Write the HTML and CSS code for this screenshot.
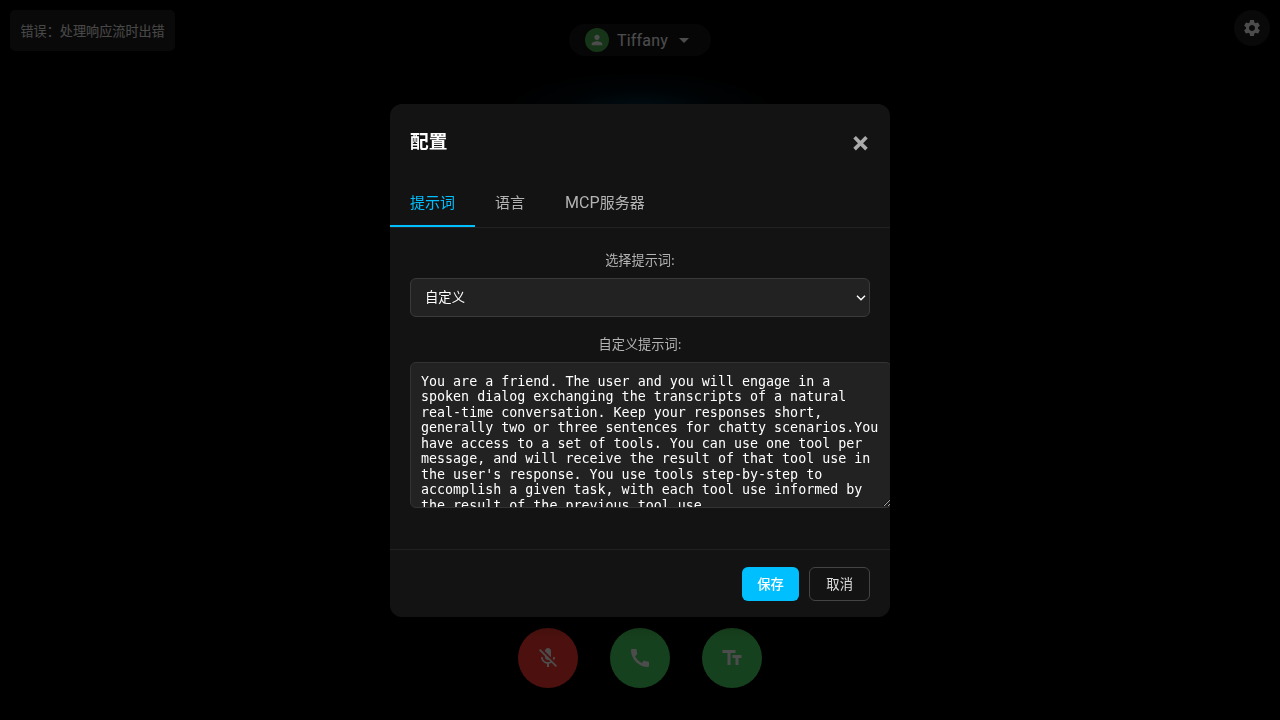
FILE: index.html
```
<!DOCTYPE html>
<html lang="zh">
<head>
<meta charset="utf-8">
<title>配置</title>
<link rel="stylesheet" href="styles.css">
</head>
<body>
<div class="app">
  <div class="glow"></div>
  <header class="topbar">
    <div class="status">错误：处理响应流时出错</div>
    <div class="voice">
      <span class="avatar"><svg viewBox="0 0 24 24" width="16" height="16"><path d="M12 12c2.21 0 4-1.79 4-4s-1.79-4-4-4-4 1.790-4 4 1.790 4 4 4zm0 2c-2.670 0-8 1.340-8 4v2h16v-2c0-2.660-5.330-4-8-4z"/></svg></span>
      <span class="voice-name">Tiffany</span>
      <svg class="caret" viewBox="0 0 24 24" width="24" height="24"><path d="M7 10l5 5 5-5z"/></svg>
    </div>
    <button class="gear"><svg viewBox="0 0 24 24" width="20" height="20"><path d="M19.14 12.94c.04-.3.06-.61.06-.94 0-.32-.02-.64-.07-.94l2.030-1.580c.18-.14.23-.41.12-.61l-1.920-3.320c-.12-.22-.37-.29-.59-.22l-2.390.96c-.5-.38-1.030-.7-1.620-.94l-.36-2.540c-.04-.24-.24-.41-.48-.41h-3.840c-.24 0-.43.17-.47.41l-.36 2.540c-.59.24-1.130.57-1.620.94l-2.390-.96c-.22-.08-.47 0-.59.22L2.740 8.870c-.12.21-.08.47.12.61l2.030 1.580c-.05.3-.09.63-.09.94s.02.64.07.94l-2.030 1.580c-.18.14-.23.41-.12.61l1.920 3.320c.12.22.37.29.59.22l2.390-.96c.5.38 1.030.7 1.620.94l.36 2.540c.05.24.24.41.48.41h3.840c.24 0 .44-.17.47-.41l.36-2.540c.59-.24 1.130-.56 1.620-.94l2.390.96c.22.08.47 0 .59-.22l1.920-3.320c.12-.22.07-.47-.12-.61l-2.010-1.580zM12 15.600c-1.980 0-3.600-1.620-3.600-3.600s1.620-3.600 3.600-3.600 3.600 1.620 3.600 3.600-1.620 3.600-3.600 3.600z"/></svg></button>
  </header>
  <footer class="controls">
    <button class="round mic"><svg viewBox="0 0 24 24" width="24" height="24"><path d="M19 11h-1.700c0 .74-.16 1.430-.43 2.050l1.230 1.230c.56-.98.9-2.090.9-3.280zm-4.020.17c0-.06.02-.11.02-.17V5c0-1.660-1.340-3-3-3S9 3.340 9 5v.18l5.980 5.990zM4.270 3L3 4.270l6.010 6.010V11c0 1.660 1.330 3 2.990 3 .22 0 .44-.03.65-.08l1.660 1.660c-.71.33-1.500.52-2.310.52-2.760 0-5.300-2.100-5.300-5.100H5c0 3.410 2.720 6.230 6 6.720V21h2v-3.280c.91-.13 1.770-.45 2.540-.9L19.730 21 21 19.730 4.270 3z"/></svg></button>
    <button class="round"><svg viewBox="0 0 24 24" width="24" height="24"><path d="M20.010 15.380c-1.230 0-2.420-.2-3.530-.56-.35-.12-.74-.03-1.010.24l-1.570 1.970c-2.830-1.350-5.480-3.900-6.890-6.830l1.950-1.660c.27-.28.35-.67.24-1.020-.37-1.110-.56-2.300-.56-3.530 0-.54-.45-.99-.99-.99H4.190C3.650 3 3 3.240 3 3.990 3 13.280 10.730 21 20.010 21c.71 0 .99-.63.99-1.180v-3.450c0-.54-.45-.99-.99-.99z"/></svg></button>
    <button class="round"><svg class="bold-icon" viewBox="0 0 24 24" width="24" height="24"><path d="M2.500 4v3h5v12h3V7h5V4h-13zm19 5h-9v3h3v7h3v-7h3V9z"/></svg></button>
  </footer>
</div>
<div class="overlay">
  <section class="modal">
    <div class="modal-head"><h3>配置</h3><span class="close">×</span></div>
    <nav class="tabs">
      <button class="tab active">提示词</button>
      <button class="tab">语言</button>
      <button class="tab"><span class="latin">MCP</span>服务器</button>
    </nav>
    <div class="modal-body">
      <label class="label" for="preset">选择提示词:</label>
      <div class="select-wrap">
        <select class="preset" id="preset"><option>自定义</option></select>
        <svg class="chevron" viewBox="0 0 10 6" width="10" height="6"><path d="M1 .8l4 4 4-4"/></svg>
      </div>
      <label class="label" for="prompt">自定义提示词:</label>
      <textarea class="prompt" id="prompt">You are a friend. The user and you will engage in a spoken dialog exchanging the transcripts of a natural real-time conversation. Keep your responses short, generally two or three sentences for chatty scenarios.You have access to a set of tools. You can use one tool per message, and will receive the result of that tool use in the user's response. You use tools step-by-step to accomplish a given task, with each tool use informed by the result of the previous tool use.</textarea>
    </div>
    <div class="modal-foot"><button class="btn save">保存</button><button class="btn">取消</button></div>
  </section>
</div>
</body>
</html>
```
FILE: styles.css
```
* { box-sizing: border-box; }
body {
  margin: 0;
  height: 720px;
  overflow: hidden;
  background: #000;
  color: #fff;
  font-family: Inter, "Noto Sans CJK SC", sans-serif;
}
button { font-family: inherit; border: 0; padding: 0; }
svg { display: block; fill: currentColor; }
.app {
  position: relative;
  height: 720px;
  display: flex;
  flex-direction: column;
  justify-content: space-between;
}
.glow {
  position: absolute;
  left: 490px;
  top: 68px;
  width: 300px;
  height: 90px;
  background: radial-gradient(closest-side, rgba(0, 105, 155, .6), rgba(0, 70, 100, .2) 50%, transparent);
}
.topbar {
  position: relative;
  display: grid;
  grid-template-columns: 1fr auto 1fr;
  align-items: start;
  padding: 10px;
}
.status {
  justify-self: start;
  height: 41px;
  padding: 0 10px 0 10.5px;
  border-radius: 5px;
  background: #212121;
  color: #fff;
  opacity: .95;
  font-size: 13.12px;
  line-height: 42px;
}
.voice {
  display: flex;
  align-items: center;
  height: 32px;
  margin-top: 14px;
  padding: 0 16px;
  border-radius: 16px;
  background: #171717;
  font: 16px Roboto, sans-serif;
}
.voice-name { letter-spacing: .2px; }
.avatar {
  display: grid;
  place-items: center;
  width: 24px;
  height: 24px;
  margin-right: 8px;
  border-radius: 50%;
  background: #4caf50;
}
.caret { margin: 0 -1px 0 4px; }
.gear {
  justify-self: end;
  display: grid;
  place-items: center;
  width: 36px;
  height: 36px;
  border-radius: 50%;
  background: #1e1e1e;
  color: #fff;
}
.controls {
  display: flex;
  justify-content: center;
  gap: 32px;
  padding-bottom: 32px;
}
.round {
  display: grid;
  place-items: center;
  width: 60px;
  height: 60px;
  border-radius: 50%;
  background: #4cd964;
  color: #fff;
}
.mic { background: #ff3b30; }
.overlay {
  position: fixed;
  inset: 0;
  display: flex;
  align-items: center;
  justify-content: center;
  background: rgba(0, 0, 0, .7);
}
.modal {
  width: 500px;
  height: 513px;
  display: flex;
  flex-direction: column;
  overflow: hidden;
  border-radius: 12px;
  background: #131313;
  box-shadow: 0 5px 20px rgba(0, 0, 0, .5);
}
.modal-head {
  display: flex;
  align-items: center;
  justify-content: space-between;
  height: 74px;
  padding: 2px 20px 0;
}
h3 { margin: 0; font-size: 18.72px; font-weight: 600; line-height: 28px; }
.close { color: #aaa; font-size: 28px; font-weight: 700; line-height: 34px; }
.tabs {
  display: flex;
  height: 50.5px;
  border-bottom: 1px solid #222;
}
.tab {
  padding: 0 20px;
  background: none;
  border-bottom: 2px solid transparent;
  color: #b3b3b3;
  font-size: 15px;
}
.latin { font: 16px Roboto, sans-serif; letter-spacing: .1px; }
.tab.active { color: #00bfff; border-color: #00bfff; }
.modal-body {
  flex: 1;
  padding: 19.5px 20px;
}
.label {
  display: block;
  height: 30px;
  color: #b3b3b3;
  font-size: 13.2px;
  line-height: 24px;
  text-align: center;
}
.select-wrap {
  position: relative;
  margin-bottom: 15px;
}
.preset {
  appearance: none;
  display: block;
  width: 100%;
  height: 39px;
  padding: 0 14px;
  border: 1px solid #3a3a3a;
  border-radius: 6px;
  background: #222;
  color: #fff;
  font-family: inherit;
  font-size: 13.333px;
}
.chevron {
  position: absolute;
  right: 4px;
  top: 17px;
  fill: none;
  stroke: #fff;
  stroke-width: 1.4;
}
.prompt {
  display: block;
  width: 482px;
  height: 146px;
  padding: 11px 10px 10px;
  overflow: hidden;
  border: 1px solid #333;
  border-radius: 6px;
  background: #222;
  color: #fff;
  font: 13.333px/15.5px "DejaVu Sans Mono", monospace;
}
.modal-foot {
  display: flex;
  justify-content: flex-end;
  gap: 10px;
  height: 67.5px;
  padding: 16.5px 20px 16px;
  border-top: 1px solid #222;
}
.btn {
  padding: 0 16px;
  border: 1px solid #444;
  border-radius: 6px;
  background: none;
  color: #ddd;
  font-size: 13.333px;
}
.save { padding: 0 15.5px; border: 0; background: #00bfff; color: #fff; font-weight: 500; }
```
